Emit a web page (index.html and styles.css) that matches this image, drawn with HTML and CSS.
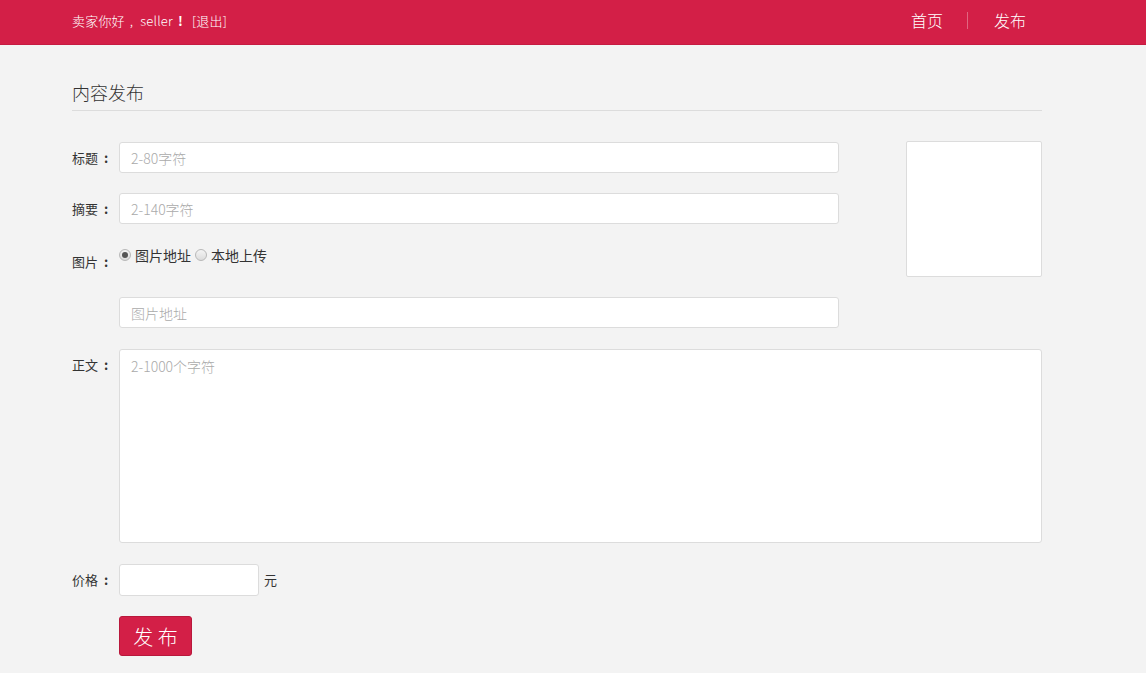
FILE: index.html
```html
<!DOCTYPE html>
<html lang="zh-CN">
<head>
  <meta charset="UTF-8">
  <title>内容发布</title>
  <link rel="stylesheet" href="styles.css">
</head>
<body>
  <!-- 顶部栏 -->
  <div class="header">
    <div class="wrap header-inner">
      <div class="user">卖家你好<span class="comma">,</span>seller<span class="bang">!</span><a href="#" class="logout">[退出]</a></div>
      <ul class="nav">
        <li><a href="#">首页</a></li>
        <li><a href="#">发布</a></li>
      </ul>
    </div>
  </div>

  <div class="wrap main">
    <h2 class="page-title">内容发布</h2>

    <form class="publish-form">
      <div class="top-part">
        <div class="fields">
          <div class="row">
            <label class="lbl">标题<span class="colon">:</span></label>
            <input type="text" class="txt" placeholder="2-80字符">
          </div>
          <div class="row">
            <label class="lbl">摘要<span class="colon">:</span></label>
            <input type="text" class="txt" placeholder="2-140字符">
          </div>
          <div class="row row-pic">
            <label class="lbl">图片<span class="colon">:</span></label>
            <div class="radios">
              <label><input type="radio" name="pic" checked> 图片地址</label>
              <label><input type="radio" name="pic"> 本地上传</label>
            </div>
          </div>
          <div class="row row-url">
            <span class="lbl"></span>
            <input type="text" class="txt" placeholder="图片地址">
          </div>
        </div>
        <div class="preview"></div>
      </div>

      <div class="row row-detail">
        <label class="lbl">正文<span class="colon">:</span></label>
        <textarea class="area" placeholder="2-1000个字符"></textarea>
      </div>
      <div class="row">
        <label class="lbl">价格<span class="colon">:</span></label>
        <input type="text" class="txt price">
        <span class="unit">元</span>
      </div>
      <div class="row">
        <span class="lbl"></span>
        <button type="button" class="btn">发 布</button>
      </div>
    </form>
  </div>
</body>
</html>
```

FILE: styles.css
```css
body {
  margin: 0;
  background: #f3f3f3;
  font-family: "Noto Sans CJK SC", "Open Sans", sans-serif;
  font-size: 13px;
  color: #333;
}

ul {
  margin: 0;
  padding: 0;
  list-style: none;
}

a {
  color: inherit;
  text-decoration: none;
}

.wrap {
  width: 1002px;
  margin: 0 auto;
  padding-right: 32px;
  box-sizing: border-box;
}

/* header */
.header {
  height: 45px;
  background: #d31f47;
  border-bottom: 1px solid #c51b41;
  box-sizing: border-box;
  color: #fff;
}

.header-inner {
  display: flex;
  align-items: center;
  justify-content: space-between;
  height: 41px;
}

.user {
  font-size: 13px;
  font-weight: 300;
  letter-spacing: 0.2px;
}

.user .comma {
  margin: 0 7px 0 5px;
}

.user .bang {
  font-weight: 700;
  margin: 0 9px 0 5px;
}

.nav {
  display: flex;
  align-items: center;
}

.nav li a {
  display: block;
  padding: 0 24px 0 26px;
  font-size: 16px;
  font-weight: 300;
  line-height: 17px;
}

.nav li + li a {
  border-left: 1px solid #e06680;
  padding-right: 16px;
}

/* main */
.page-title {
  margin: 0 0 31px;
  padding: 34px 0 5px;
  font-size: 18px;
  font-weight: 300;
  line-height: 26px;
  border-bottom: 1px solid #dcdcdc;
}

.top-part {
  display: flex;
  align-items: flex-start;
}

.fields {
  width: 767px;
}

.preview {
  margin-left: auto;
  margin-top: -1px;
  width: 136px;
  height: 136px;
  background: #fff;
  border: 1px solid #dcdcdc;
  border-radius: 2px;
  box-sizing: border-box;
}

.row {
  display: flex;
  align-items: flex-start;
  margin-bottom: 20px;
}

.lbl {
  width: 47px;
  flex-shrink: 0;
  line-height: 31px;
  color: #333;
}

.colon {
  margin-left: 6px;
  font-weight: 700;
}

.txt,
.area {
  width: 720px;
  height: 31px;
  padding: 0 11px;
  border: 1px solid #dcdcdc;
  border-radius: 3px;
  background: #fff;
  box-sizing: border-box;
  font-family: inherit;
  font-size: 14px;
  font-weight: 300;
  color: #333;
  outline: none;
}

.txt::placeholder,
.area::placeholder {
  color: #aaa;
}

.row-pic {
  margin-bottom: 17px;
}

.row-pic .lbl {
  line-height: 36px;
}

.radios {
  display: flex;
  line-height: 22px;
  font-size: 14px;
}

.radios label {
  display: flex;
  align-items: center;
  margin-right: 4px;
}

.radios input {
  appearance: none;
  -webkit-appearance: none;
  width: 12px;
  height: 12px;
  margin: 0 4px 1px 0;
  border: 1px solid #b8b8b8;
  border-radius: 50%;
  background: linear-gradient(#f4f4f4, #dcdcdc);
  box-sizing: border-box;
  position: relative;
}

.radios input:checked::after {
  content: "";
  position: absolute;
  left: 2px;
  top: 2px;
  width: 6px;
  height: 6px;
  border-radius: 50%;
  background: #555;
}

.row-url {
  margin-bottom: 21px;
}

.area {
  width: 923px;
  height: 194px;
  padding: 7px 11px;
  resize: none;
  line-height: 18px;
}

.row-detail {
  margin-bottom: 21px;
}

.price {
  width: 140px;
  height: 32px;
}

.unit {
  margin-left: 5px;
  line-height: 32px;
}

.btn {
  width: 73px;
  height: 40px;
  padding: 0;
  background: #d31f47;
  border: 1px solid #b8183b;
  border-radius: 3px;
  color: #fff;
  font-family: inherit;
  font-size: 20px;
  font-weight: 300;
  cursor: pointer;
}
```
